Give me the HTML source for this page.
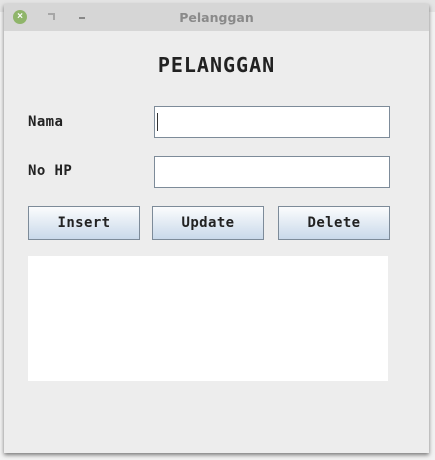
<!DOCTYPE html>
<html><head><style>
body{margin:0;width:435px;height:460px;background:#f2f2f2;position:relative;overflow:hidden;font-family:"DejaVu Sans Mono","Liberation Mono",monospace;}
.top{position:absolute;left:0;top:0;width:435px;height:12px;background:#e4e4e4;}
.win{position:absolute;left:4px;top:4px;width:425px;height:449px;background:#ededed;box-shadow:0 2px 4px rgba(0,0,0,.5);}
.tb{position:absolute;left:0;top:0;width:425px;height:27px;background:#d6d6d6;}
.tt{position:absolute;left:0;width:425px;top:6px;text-align:center;font:bold 12.5px "DejaVu Sans","Liberation Sans",sans-serif;color:#8a8a8a;}
.cl{position:absolute;left:9px;top:6px;width:14px;height:14px;border-radius:50%;background:#8fb56a;color:#fff;font:bold 10px sans-serif;text-align:center;line-height:14px;}
.ab{position:absolute;}
.h{position:absolute;left:0;width:425px;top:49px;text-align:center;font-weight:bold;font-size:20px;letter-spacing:1px;color:#222;}
.lb{position:absolute;left:24px;font-weight:bold;font-size:14px;letter-spacing:0.4px;color:#222;}
.tf{position:absolute;left:150px;width:234px;height:30px;background:#fff;border:1px solid #7d8b99;}
.bt{position:absolute;top:202px;border:1px solid #7d8b99;background:linear-gradient(#fbfcfd,#c9d9ea);font-weight:bold;font-size:14px;letter-spacing:0.4px;color:#222;text-align:center;line-height:32px;box-sizing:border-box;height:34px;}
</style></head><body>
<div class="top"></div>
<div class="win">
<div class="tb"><div class="cl">×</div>
<div class="ab" style="left:44px;top:9px;width:5px;height:5px;border-top:2px solid #888;border-right:2px solid #888;opacity:.6"></div>
<div class="ab" style="left:75px;top:13px;width:6px;height:2px;background:#888"></div>
<div class="tt">Pelanggan</div></div>
<div class="h">PELANGGAN</div>
<div class="lb" style="top:110px">Nama</div>
<div class="lb" style="top:159px">No HP</div>
<div class="tf" style="top:102px"><div style="position:absolute;left:2px;top:6px;width:1px;height:18px;background:#333"></div></div>
<div class="tf" style="top:152px"></div>
<div class="bt" style="left:24px;width:112px">Insert</div>
<div class="bt" style="left:148px;width:112px">Update</div>
<div class="bt" style="left:274px;width:112px">Delete</div>
<div class="ab" style="left:24px;top:252px;width:360px;height:125px;background:#fff"></div>
</div>
</body></html>
